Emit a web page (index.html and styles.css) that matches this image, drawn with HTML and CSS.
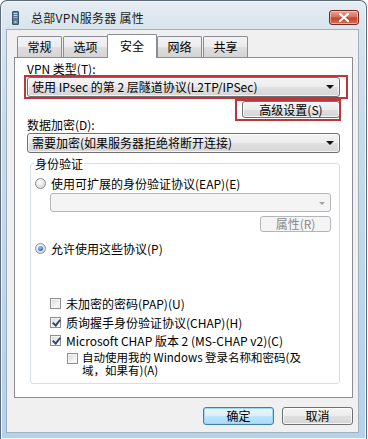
FILE: index.html
```html
<!DOCTYPE html>
<html lang="zh-CN">
<head>
<meta charset="utf-8">
<title>总部VPN服务器 属性</title>
<link rel="stylesheet" href="styles.css">
</head>
<body>
<div class="window">
  <div class="titlebar">
    <svg class="appicon" width="7" height="14" viewBox="0 0 7 14">
      <rect x="0.5" y="0.5" width="6" height="13" rx="0.5" fill="#5d7a9a" stroke="#3b5370"/>
      <rect x="1.5" y="2" width="4" height="1" fill="#b9d2ea"/>
      <rect x="1.5" y="4" width="4" height="1" fill="#b9d2ea"/>
      <rect x="1.5" y="6" width="4" height="1" fill="#8fb2d6"/>
      <rect x="2.5" y="10" width="2" height="2" fill="#9fe07a"/>
    </svg>
    <span class="title">总部VPN服务器 属性</span>
    <div class="close">
      <svg width="12" height="9" viewBox="0 0 12 9">
        <path d="M2 1 L10 8 M10 1 L2 8" stroke="#fff" stroke-width="2.2" stroke-linecap="round"/>
      </svg>
    </div>
  </div>
  <div class="client">
    <div class="tabs">
      <div class="tab">常规</div>
      <div class="tab">选项</div>
      <div class="tab active">安全</div>
      <div class="tab">网络</div>
      <div class="tab">共享</div>
    </div>
    <div class="panel">
      <div class="label l1">VPN 类型(T):</div>
      <div class="combo c1 marked-combo">
        <span class="combo-text">使用 IPsec 的第 2 层隧道协议(L2TP/IPSec)</span>
        <span class="arrow"></span>
      </div>
      <div class="row-right">
        <div class="btn adv marked-btn">高级设置(S)</div>
      </div>
      <div class="label l2">数据加密(D):</div>
      <div class="combo c2">
        <span class="combo-text">需要加密(如果服务器拒绝将断开连接)</span>
        <span class="arrow"></span>
      </div>
      <fieldset class="group">
        <legend>身份验证</legend>
        <div class="opt r1"><span class="radio"></span><span>使用可扩展的身份验证协议(EAP)(E)</span></div>
        <div class="combo disabled eap"><span class="combo-text"></span><span class="arrow"></span></div>
        <div class="row-right prop-row">
          <div class="btn disabled prop">属性(R)</div>
        </div>
        <div class="opt r2"><span class="radio checked"></span><span>允许使用这些协议(P)</span></div>
        <div class="opt cb cb1"><span class="check"></span><span>未加密的密码(PAP)(U)</span></div>
        <div class="opt cb cb2"><span class="check checked"></span><span>质询握手身份验证协议(CHAP)(H)</span></div>
        <div class="opt cb cb3"><span class="check checked"></span><span>Microsoft CHAP 版本 2 (MS-CHAP v2)(C)</span></div>
        <div class="opt cb cb4"><span class="check"></span><span class="wrap">自动使用我的 Windows 登录名称和密码(及<br>域，如果有)(A)</span></div>
      </fieldset>
    </div>
    <div class="footer">
      <div class="btn default">确定</div>
      <div class="btn">取消</div>
    </div>
  </div>
</div>
</body>
</html>
```

FILE: styles.css
```css
html, body {
  margin: 0;
  padding: 0;
  background: #ffffff;
}
body {
  width: 368px;
  height: 439px;
  overflow: hidden;
  font-family: "Noto Sans CJK SC", "Noto Sans", sans-serif;
  font-size: 12px;
  color: #000;
}
.window {
  width: 367px;
  height: 439px;
  box-sizing: border-box;
  display: flex;
  flex-direction: column;
  border: 1px solid #5c6c7b;
  border-bottom: none;
  border-radius: 7px 7px 0 0;
  background: linear-gradient(180deg, #e6edf3 0px, #d9e4ed 28px, #c9dbea 120px, #bcd6ec 300px, #b3d2ec 439px);
  box-shadow: inset 0 0 0 1px #f4f8fb;
}
.titlebar {
  height: 29px;
  display: flex;
  align-items: center;
  flex: none;
}
.appicon {
  margin-left: 11px;
  margin-top: 4px;
}
.title {
  margin-left: 12px;
  margin-top: 4px;
  font-size: 12px;
  color: #1b1b1b;
  letter-spacing: 0.3px;
}
.close {
  margin-left: auto;
  margin-right: 7px;
  margin-top: 4px;
  width: 30px;
  height: 15px;
  box-sizing: border-box;
  border: 1px solid #6d2a22;
  border-radius: 3px;
  background: linear-gradient(180deg, #e8a494 0%, #d7705e 45%, #c7432c 55%, #d5715a 100%);
  box-shadow: inset 0 0 0 1px rgba(255, 220, 210, 0.6);
  display: flex;
  align-items: center;
  justify-content: center;
}
.client {
  flex: none;
  margin: 0 8px 0 6px;
  height: 402px;
  box-sizing: border-box;
  background: #f0f0f0;
  box-shadow: 0 0 0 1px #9fb0bf;
  padding: 4px 0 0 7px;
  display: flex;
  flex-direction: column;
}
.tabs {
  display: flex;
  align-items: flex-start;
  height: 24px;
  margin-bottom: -1px;
  position: relative;
  z-index: 1;
  padding-left: 3px;
}
.tab {
  width: 45px;
  height: 21px;
  margin-top: 2px;
  margin-left: 1px;
  box-sizing: border-box;
  border: 1px solid #898c95;
  border-bottom: none;
  border-radius: 2px 2px 0 0;
  background: linear-gradient(180deg, #f3f3f3 0%, #ececec 50%, #dedede 51%, #d4d4d4 100%);
  display: flex;
  align-items: center;
  justify-content: center;
  font-size: 12px;
  line-height: 14px;
}
.tab:first-child {
  margin-left: 0;
}
.tab.active {
  width: 50px;
  height: 24px;
  margin-top: 0;
  margin-left: -1px;
  margin-right: -1px;
  background: #ffffff;
  padding-bottom: 2px;
}
.panel {
  width: 339px;
  height: 341px;
  box-sizing: border-box;
  border: 1px solid #898c95;
  background: #ffffff;
  padding: 0 12px 0 12px;
  display: flex;
  flex-direction: column;
}
.label {
  height: 13px;
  line-height: 13px;
  white-space: nowrap;
}
.l1 {
  margin-top: 4px;
}
.l2 {
  margin-top: 0;
}
.combo {
  position: relative;
  height: 20px;
  box-sizing: border-box;
  border: 1px solid #707070;
  border-radius: 3px;
  background: linear-gradient(180deg, #f4f4f4 0%, #ececec 50%, #e0e0e0 51%, #d6d6d6 100%);
  box-shadow: inset 0 0 0 1px rgba(255, 255, 255, 0.7);
  display: flex;
  align-items: center;
  padding-left: 4px;
  white-space: nowrap;
}
.c1 {
  margin-top: 2px;
}
.c2 {
  margin-top: 2px;
}
.combo-text {
  line-height: 14px;
}
.arrow {
  position: absolute;
  right: 5px;
  top: 7px;
  width: 0;
  height: 0;
  border-left: 4px solid transparent;
  border-right: 4px solid transparent;
  border-top: 4px solid #111;
}
.combo.disabled {
  border-color: #b3b6ba;
  background: #f4f4f4;
  box-shadow: none;
}
.combo.disabled .arrow {
  border-top-color: #a0a0a0;
  border-left-width: 3px;
  border-right-width: 3px;
  border-top-width: 3px;
  top: 8px;
}
.row-right {
  display: flex;
  justify-content: flex-end;
}
.btn {
  position: relative;
  box-sizing: border-box;
  border: 1px solid #707070;
  border-radius: 3px;
  background: linear-gradient(180deg, #f4f4f4 0%, #ececec 50%, #e0e0e0 51%, #d4d4d4 100%);
  box-shadow: inset 0 0 0 1px rgba(255, 255, 255, 0.75);
  display: flex;
  align-items: center;
  justify-content: center;
  line-height: 14px;
  white-space: nowrap;
}
.adv {
  margin-top: 4px;
  width: 98px;
  height: 17px;
}
.marked-combo::after,
.marked-btn::after {
  content: "";
  position: absolute;
  border: 2px solid #c0353b;
  pointer-events: none;
}
.marked-combo::after {
  left: -4px;
  right: -9px;
  top: -3px;
  bottom: -3px;
}
.marked-btn::after {
  left: -8px;
  right: -2px;
  top: -3px;
  bottom: -4px;
}
.group {
  margin: 4px 0 0 3px;
  padding: 0 0 0 3px;
  height: 227px;
  box-sizing: border-box;
  border: 1px solid #d5dfe5;
  border-radius: 3px;
  min-width: 0;
  display: flex;
  flex-direction: column;
}
.group legend {
  padding: 0 1px;
  height: 13px;
  line-height: 13px;
}
.opt {
  display: flex;
  align-items: center;
  height: 13px;
  line-height: 13px;
  white-space: nowrap;
}
.r1 {
  margin-top: 7px;
  margin-left: 1px;
}
.r2 {
  margin-top: 10px;
  margin-left: 1px;
}
.radio {
  width: 11px;
  height: 11px;
  box-sizing: border-box;
  border-radius: 50%;
  border: 1px solid #8e8f8f;
  background: radial-gradient(circle at 40% 35%, #ffffff 0%, #e8e8e8 45%, #c9c9c9 100%);
  margin-right: 5px;
  flex: none;
  position: relative;
}
.radio.checked::after {
  content: "";
  position: absolute;
  left: 2px;
  top: 2px;
  width: 5px;
  height: 5px;
  border-radius: 50%;
  background: radial-gradient(circle at 40% 35%, #a6d3f7 0%, #3b7cc2 55%, #1d4f86 100%);
}
.eap {
  margin-top: 3px;
  margin-left: 16px;
  margin-right: 8px;
  height: 19px;
}
.prop-row {
  margin-top: 4px;
  margin-right: 8px;
}
.prop {
  width: 71px;
  height: 16px;
}
.btn.disabled {
  border-color: #b3b6ba;
  background: #f4f4f4;
  box-shadow: none;
  color: #8a8a8a;
}
.cb {
  margin-left: 16px;
}
.cb1 {
  margin-top: 42px;
}
.cb2 {
  margin-top: 6px;
}
.cb3 {
  margin-top: 5px;
}
.cb4 {
  margin-top: 4px;
  margin-left: 33px;
  height: auto;
  align-items: flex-start;
}
.check {
  width: 11px;
  height: 11px;
  box-sizing: border-box;
  border: 1px solid #8e8f8f;
  background: linear-gradient(135deg, #d6d9de 0%, #f4f4f4 70%, #ffffff 100%);
  box-shadow: inset 0 0 0 1px #f4f4f4;
  margin-right: 5px;
  flex: none;
  position: relative;
}
.check.checked::after {
  content: "";
  position: absolute;
  left: 3px;
  top: 0px;
  width: 3px;
  height: 6px;
  border-right: 2px solid #35477a;
  border-bottom: 2px solid #35477a;
  transform: rotate(40deg);
}
.cb4 .check {
  margin-top: 2px;
  margin-right: 4px;
}
.wrap {
  font-size: 11.5px;
  line-height: 13px;
  white-space: nowrap;
}
.footer {
  display: flex;
  justify-content: flex-end;
  gap: 8px;
  margin-top: 9px;
  padding-right: 5px;
}
.footer .btn {
  width: 71px;
  height: 18px;
}
.btn.default {
  border-color: #3c7fb1;
  background: linear-gradient(180deg, #eaf6fd 0%, #d9f0fc 50%, #bee6fd 51%, #a7d9f5 100%);
  box-shadow: inset 0 0 0 1px #9fd6f3;
}
```
